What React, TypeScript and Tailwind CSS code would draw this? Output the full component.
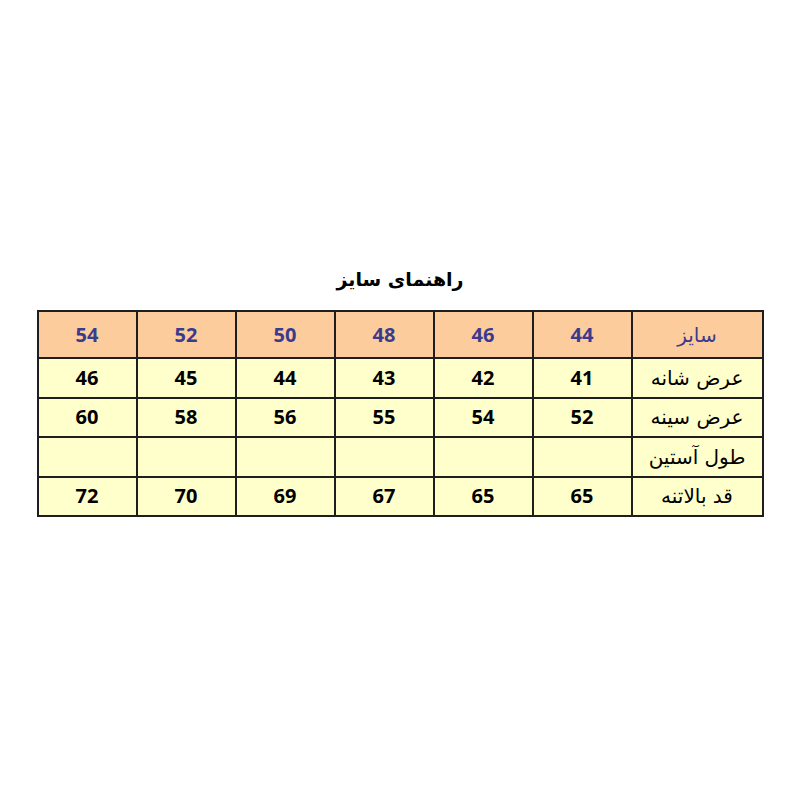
const sizes = ["54", "52", "50", "48", "46", "44"];

const rows: { label: string; values: string[] }[] = [
  { label: "عرض شانه", values: ["46", "45", "44", "43", "42", "41"] },
  { label: "عرض سینه", values: ["60", "58", "56", "55", "54", "52"] },
  { label: "طول آستین", values: ["", "", "", "", "", ""] },
  { label: "قد بالاتنه", values: ["72", "70", "69", "67", "65", "65"] },
];

const faFont = "font-['DejaVu_Sans',sans-serif]";
const numFont = "font-['Open_Sans','Liberation_Sans',sans-serif]";

export default function App() {
  return (
    <div className="flex h-[800px] w-[800px] flex-col items-center bg-white">
      <h1
        dir="rtl"
        className={`mt-[264px] text-[19px] font-bold leading-[30px] text-black ${faFont}`}
      >
        راهنمای سایز
      </h1>

      <table className="mt-[16px] w-[725px] table-fixed border-collapse">
        <colgroup>
          {sizes.map((s) => (
            <col key={s} className="w-[99px]" />
          ))}
          <col className="w-[131px]" />
        </colgroup>
        <thead>
          <tr className="h-[47px] bg-[#fccc9c]">
            {sizes.map((s) => (
              <th
                key={s}
                className={`border-2 border-[#1e1e1e] text-center text-[20px] font-bold text-[#3b3b8e] ${numFont}`}
              >
                {s}
              </th>
            ))}
            <th
              dir="rtl"
              className={`border-2 border-[#1e1e1e] text-center text-[20px] font-normal text-[#3b3b8e] ${faFont}`}
            >
              سایز
            </th>
          </tr>
        </thead>
        <tbody>
          {rows.map((row) => (
            <tr key={row.label} className="h-[39.5px] bg-[#ffffcc]">
              {row.values.map((v, i) => (
                <td
                  key={i}
                  className={`border-2 border-[#1e1e1e] text-center text-[20px] font-bold text-black ${numFont}`}
                >
                  {v}
                </td>
              ))}
              <td
                dir="rtl"
                className={`border-2 border-[#1e1e1e] text-center text-[20px] text-black ${faFont}`}
              >
                {row.label}
              </td>
            </tr>
          ))}
        </tbody>
      </table>
    </div>
  );
}
